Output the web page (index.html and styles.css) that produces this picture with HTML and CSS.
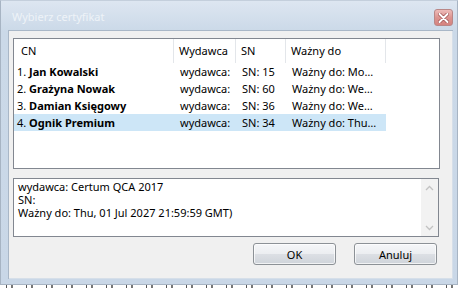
FILE: index.html
```html
<!DOCTYPE html>
<html lang="pl">
<head>
<meta charset="utf-8">
<title>Wybierz certyfikat</title>
<link rel="stylesheet" href="styles.css">
</head>
<body>
<div class="window">
  <div class="titlebar">
    <span class="title">Wybierz certyfikat</span>
    <div class="close">
      <svg width="11" height="10" viewBox="0 0 11 10">
        <path d="M1.5 1 L9.5 9 M9.5 1 L1.5 9" stroke="#9a4c4c" stroke-width="3.4" stroke-linecap="round"/>
        <path d="M1.5 1 L9.5 9 M9.5 1 L1.5 9" stroke="#ffffff" stroke-width="2" stroke-linecap="round"/>
      </svg>
    </div>
  </div>
  <div class="client">
    <div class="list">
      <div class="row header">
        <div class="cell cn">CN</div>
        <div class="cell">Wydawca</div>
        <div class="cell">SN</div>
        <div class="cell">Ważny do</div>
      </div>
      <div class="row">
        <div class="cell cn">1. <b>Jan Kowalski</b></div>
        <div class="cell">wydawca:</div>
        <div class="cell">SN: 15</div>
        <div class="cell">Ważny do: Mo…</div>
      </div>
      <div class="row">
        <div class="cell cn">2. <b>Grażyna Nowak</b></div>
        <div class="cell">wydawca:</div>
        <div class="cell">SN: 60</div>
        <div class="cell">Ważny do: We…</div>
      </div>
      <div class="row">
        <div class="cell cn">3. <b>Damian Księgowy</b></div>
        <div class="cell">wydawca:</div>
        <div class="cell">SN: 36</div>
        <div class="cell">Ważny do: We…</div>
      </div>
      <div class="row selected">
        <div class="cell cn">4. <b>Ognik Premium</b></div>
        <div class="cell">wydawca:</div>
        <div class="cell">SN: 34</div>
        <div class="cell">Ważny do: Thu…</div>
      </div>
    </div>
    <div class="details">
      <div class="details-text">
        <div>wydawca: Certum QCA 2017</div>
        <div>SN:</div>
        <div>Ważny do: Thu, 01 Jul 2027 21:59:59 GMT)</div>
      </div>
      <div class="scrollbar">
        <svg width="9" height="6" viewBox="0 0 9 6"><path d="M1 5 L4.5 1.5 L8 5" fill="none" stroke="#c2c2c2" stroke-width="1.3"/></svg>
        <svg width="9" height="6" viewBox="0 0 9 6"><path d="M1 1 L4.5 4.5 L8 1" fill="none" stroke="#c2c2c2" stroke-width="1.3"/></svg>
      </div>
    </div>
    <div class="buttons">
      <button class="btn">OK</button>
      <button class="btn">Anuluj</button>
    </div>
  </div>
</div>
<div class="under"></div>
</body>
</html>
```
FILE: styles.css
```css
html, body {
  margin: 0;
  padding: 0;
  background: #ffffff;
}
body {
  width: 458px;
  height: 288px;
  overflow: hidden;
  font-family: "Noto Sans", "Open Sans", sans-serif;
  font-size: 11px;
  color: #000;
}
.window {
  width: 458px;
  height: 285px;
  box-sizing: border-box;
  background: linear-gradient(#dde6f1 0px, #cbd9e8 30px, #c9d7e7 100%);
  border: 1px solid #a7b4c3;
  border-top-color: #c4cfdc;
  display: flex;
  flex-direction: column;
}
.titlebar {
  height: 29px;
  display: flex;
  align-items: center;
  padding-left: 11px;
  padding-right: 4px;
  box-sizing: border-box;
}
.title {
  flex: 1;
  color: #eef3f8;
  font-size: 11px;
  padding-top: 2px;
}
.close {
  width: 19px;
  height: 17px;
  box-sizing: border-box;
  margin-top: 4px;
  border: 1px solid #b98787;
  border-radius: 3px;
  background: linear-gradient(#eebcb9, #dc9490 50%, #d5837f);
  display: flex;
  align-items: center;
  justify-content: center;
}
.client {
  margin-left: 7px;
  margin-right: 4px;
  height: 249px;
  background: #f0f0f0;
  box-shadow: inset 1px 1px 0 #a9b7c7, inset -1px -1px 0 #d6dfe9;
  padding: 8px 0 0 5px;
  box-sizing: border-box;
}
.list {
  width: 427px;
  height: 131px;
  box-sizing: border-box;
  border: 1px solid #828790;
  background: #ffffff;
}
.row {
  display: grid;
  grid-template-columns: 160px 62px 50px 100px;
  height: 17px;
  line-height: 17px;
  width: 372px;
  white-space: nowrap;
}
.row .cell {
  overflow: hidden;
  padding-left: 6px;
}
.row .cell.cn {
  padding-left: 3px;
}
.row.header {
  height: 24px;
  line-height: 23px;
}
.row.header .cell {
  border-right: 1px solid #e3e6ea;
  padding-left: 5px;
}
.row.header .cell.cn {
  padding-left: 7px;
}
.row.selected {
  background: #cde6f7;
}
.row b {
  font-weight: 700;
}
.details {
  margin-top: 9px;
  width: 426px;
  height: 59px;
  box-sizing: border-box;
  border: 1px solid #828790;
  background: #ffffff;
  display: flex;
}
.details-text {
  flex: 1;
  padding: 1px 0 0 4px;
  line-height: 13px;
}
.scrollbar {
  width: 17px;
  background: #f2f2f2;
  display: flex;
  flex-direction: column;
  justify-content: space-between;
  align-items: center;
  padding: 6px 0 5px;
  box-sizing: border-box;
}
.buttons {
  margin-top: 6px;
  width: 427px;
  display: flex;
  justify-content: flex-end;
  gap: 18px;
  padding-right: 3px;
  box-sizing: border-box;
}
.btn {
  width: 83px;
  height: 22px;
  border: 1px solid #8c9196;
  border-radius: 3px;
  background: linear-gradient(#f5f6f8 0%, #eceef1 48%, #dcdfe4 52%, #cfd4da 100%);
  box-shadow: inset 0 0 0 1px rgba(255,255,255,0.7);
  font-family: "Noto Sans", "Open Sans", sans-serif;
  font-size: 11px;
  color: #000;
  padding: 0;
}
.under {
  height: 3px;
  background: repeating-linear-gradient(90deg, #ffffff 0 6px, #555 6px 7px, #ffffff 7px 11px, #777 11px 13px, #fff 13px 20px);
}
```
